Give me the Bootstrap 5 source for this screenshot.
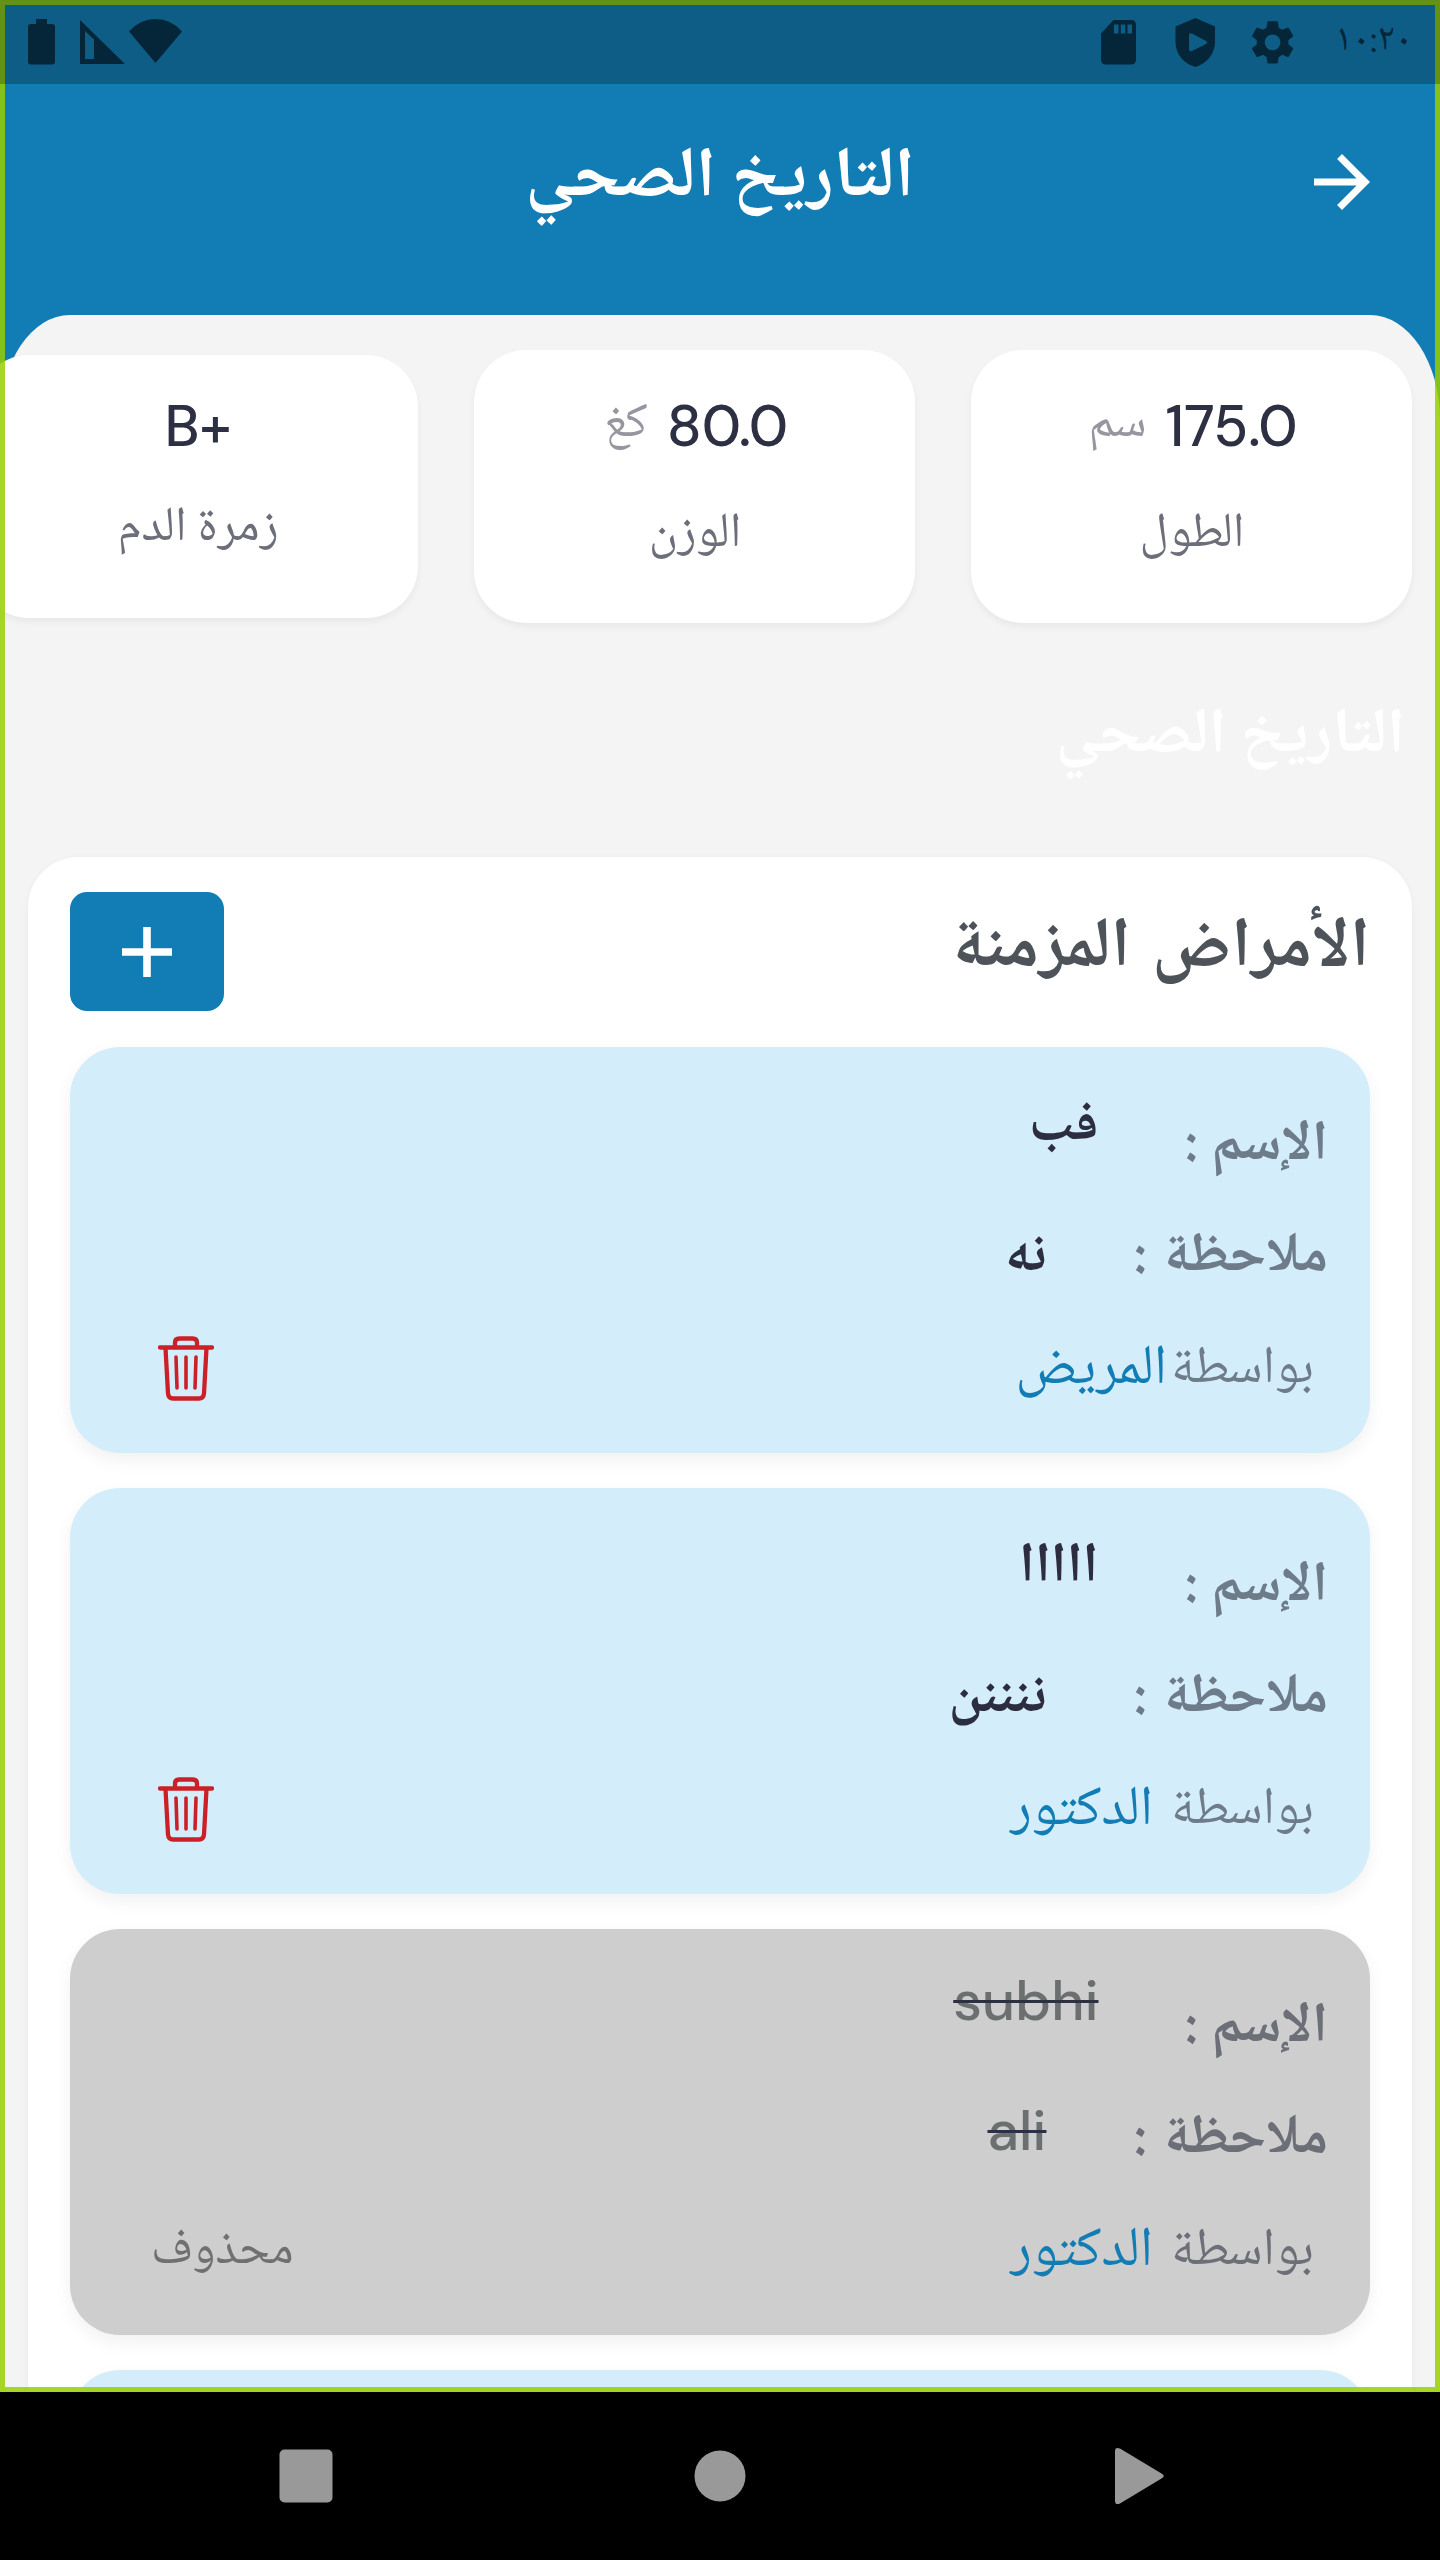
<!DOCTYPE html>
<html lang="ar" dir="rtl">
<head>
<meta charset="utf-8">
<meta name="viewport" content="width=device-width, initial-scale=1">
<title>التاريخ الصحي</title>
<link rel="stylesheet" href="https://cdn.jsdelivr.net/npm/bootstrap@5.3.0/dist/css/bootstrap.min.css">
<style>
  :root { --brand: #127cb5; --ink: #2c3042; }
  body { width: 1440px; height: 2560px; background: #000; color: var(--ink);
    font-family: "DM Sans", "Noto Naskh Arabic", "Noto Naskh Arabic UI", Inter, "DejaVu Sans", sans-serif; }
  .arabic { font-family: "Noto Naskh Arabic", "DejaVu Sans", sans-serif; }
  .screen { height: 2392px; background: var(--brand); }
  .screen-frame { inset: 0; border: 5px solid rgba(152,207,0,.85); z-index: 2; pointer-events: none; }
  .status-bar { height: 84px; background: rgba(0,0,0,.25); z-index: 3; color: #052638; padding: 0 28px 0 28px; }
  .clock { font-size: 38.5px; line-height: 90px; width: 72px; white-space: nowrap; }
  .app-bar { height: 231px; }
  .app-title { font-size: 70.7px; line-height: 120px; font-weight: 700; color: #fff; margin-top: 37px; }
  .back-btn { inset-inline-start: 70px; top: 70px; width: 56px; height: 56px; }
  .sheet { height: 2077px; background: #f4f4f4; border-radius: 70px 70px 0 0 / 105px 105px 0 0; }
  .stats { gap: 56px; padding: 35px 28px 0 0; height: 322px; }
  .stat { width: 441px; height: 273px; border-radius: 52px; background: #fff; box-shadow: 0 4px 7px rgba(0,0,0,.05); }
  .stat-short { height: 263px; margin-top: 5px; }
  .stat-value { font-family: "DM Sans", Inter, sans-serif; font-weight: 500; font-size: 57px; line-height: 71px; height: 70px; margin-top: 41px; padding-left: 3px; gap: 19px; }
  .stat-short .stat-value { margin-top: 36px; padding-left: 1px; }
  .stat-unit { font-size: 49px; line-height: 70px; color: #95969f; font-weight: 400; }
  .stat-name { font-size: 49px; line-height: 70px; color: #6c6f7a; margin-top: 40px; padding-left: 1px; }
  .stat-short .stat-name { margin-top: 34px; }
  .ghost-title { font-size: 63.4px; line-height: 100px; font-weight: 700; color: #fff; padding-right: 35px; height: 220px; padding-top: 51px; }
  .panel { height: 1600px; margin: 0 28px; border-radius: 50px 50px 0 0; background: #fff; padding: 0 42px; box-shadow: 0 2px 7px rgba(0,0,0,.05); }
  .panel-head { height: 189.5px; padding-top: 35px; }
  .panel-title { font-size: 70px; line-height: 118px; font-weight: 700; color: #4d5359; word-spacing: 6px; }
  .add-btn { width: 154px; height: 119px; border-radius: 17px; background: var(--brand); }
  .entry { height: 406px; margin-bottom: 35px; border-radius: 50px; background: #d4edfb; padding: 43px 42px 0 70px; box-shadow: 0 7px 18px rgba(0,0,0,.06); color: #6e7c8a; }
  .entry-deleted { background: #cecece; color: #6c6f77; }
  .entry-row { height: 112px; font-size: 56px; line-height: 114px; }
  .entry-label { font-weight: 700; white-space: pre; }
  .label-wide { word-spacing: 4px; }
  .entry-value { font-weight: 700; color: #2c2e40; margin-right: 85px; }
  .label-wide + .entry-value { margin-right: 86px; }
  .entry-raised { line-height: 77px; }
  .entry-deleted .entry-value { font-family: "DM Sans", Inter, sans-serif; font-weight: 500; font-size: 56.5px; color: #6b6f70; text-decoration: line-through 3px var(--ink); line-height: 94px; }
  .entry-deleted .entry-raised { line-height: 58px; }
  .entry-by { font-size: 52.5px; padding-right: 14px; }
  .entry-author { font-size: 56px; color: var(--brand); margin-right: 18px; }
  .author-near { margin-right: 4px; }
  .entry-trash { width: 56px; height: 68px; margin: 20px auto 0 18px; }
  .entry-state { font-size: 49px; color: #707070; margin-left: 11px; line-height: 113px; }
  .nav-keys { height: 168px; }
</style>
</head>
<body>
<div class="screen position-relative overflow-hidden">
  <div class="screen-frame position-absolute"></div>
  <div class="status-bar position-relative d-flex align-items-center justify-content-between">
    <div class="d-flex align-items-center">
      <span class="clock arabic">١٠:٢٠</span>
      <svg width="400" height="84" viewBox="940 0 400 84" fill="currentColor">
        <path d="M1113.500 20H1131q5 0 5 5V59.500q0 5-5 5H1106q-5 0-5-5V33.500zM1114 24.500v9h4.500v-9zm6.800 0v9h4.500v-9zm6.700 0v9h4.500v-9z" fill-rule="evenodd"/>
        <path d="M1195.500 18 1215 26.500V42c0 12-9 22-19.500 25C1184 64 1175.500 54 1175.500 42V26.500zM1189 35v14q0 3 3 2l14-7q2.500-1.500 0-3l-14-7.500q-3-1-3 1.500z" fill-rule="evenodd"/>
        <path transform="translate(1246.2 15.900) scale(2.2)" d="M19.140 12.940c.04-.3.06-.61.06-.94 0-.32-.02-.64-.07-.94l2.030-1.580c.18-.14.23-.41.12-.61l-1.920-3.320c-.12-.22-.37-.29-.59-.22l-2.390.96c-.5-.38-1.030-.7-1.620-.94L14.400 2.810c-.04-.24-.24-.41-.48-.41h-3.840c-.24 0-.43.17-.47.41l-.36 2.540c-.59.24-1.130.57-1.620.94l-2.390-.96c-.22-.08-.47 0-.59.22L2.740 8.870c-.12.21-.08.47.12.61l2.030 1.580c-.05.3-.09.63-.09.94s.02.64.07.94l-2.030 1.580c-.18.14-.23.41-.12.61l1.920 3.320c.12.22.37.29.59.22l2.390-.96c.5.38 1.030.7 1.620.94l.36 2.540c.05.24.24.41.48.41h3.840c.24 0 .44-.17.47-.41l.36-2.540c.59-.24 1.130-.56 1.620-.94l2.390.96c.22.08.47 0 .59-.22l1.920-3.320c.12-.22.07-.47-.12-.61zM12 15.600a3.600 3.600 0 1 1 0-7.200 3.600 3.600 0 0 1 0 7.200z"/>
      </svg>
    </div>
    <svg width="156" height="84" viewBox="28 0 156 84" fill="currentColor">
      <path d="M36 19h11v5h5q3 0 3 3v34.500q0 3-3 3H31q-3 0-3-3V27q0-3 3-3h5z"/>
      <path d="M80 20 125 64H80zM85 31v28h9V39.500z" fill-rule="evenodd"/>
      <path d="M155.500 63 129 31.500Q140 19 155.500 19T182 31.500z"/>
    </svg>
  </div>
  <header class="app-bar position-relative d-flex justify-content-center">
    <svg class="back-btn position-absolute" viewBox="4 4 16 16" fill="#fff" role="img" aria-label="رجوع"><path d="m12 4-1.410 1.410L16.170 11H4v2h12.170l-5.580 5.590L12 20l8-8z"/></svg>
    <h1 class="app-title arabic mb-0">التاريخ الصحي</h1>
  </header>
  <main class="sheet">
    <div class="stats d-flex">
      <div class="stat flex-shrink-0 d-flex flex-column align-items-center">
        <div class="stat-value d-flex"><span>175.0</span><span class="stat-unit arabic">سم</span></div>
        <div class="stat-name arabic">الطول</div>
      </div>
      <div class="stat flex-shrink-0 d-flex flex-column align-items-center">
        <div class="stat-value d-flex"><span>80.0</span><span class="stat-unit arabic">كغ</span></div>
        <div class="stat-name arabic">الوزن</div>
      </div>
      <div class="stat stat-short flex-shrink-0 d-flex flex-column align-items-center">
        <div class="stat-value" dir="ltr">B+</div>
        <div class="stat-name arabic">زمرة الدم</div>
      </div>
    </div>
    <h2 class="ghost-title arabic mb-0">التاريخ الصحي</h2>
    <section class="panel arabic">
      <div class="panel-head d-flex justify-content-between">
        <h3 class="panel-title mb-0">الأمراض المزمنة</h3>
        <button class="add-btn btn border-0 p-0 d-flex align-items-center justify-content-center" type="button" aria-label="إضافة">
          <svg width="50" height="50" viewBox="0 0 50 50" fill="#fff"><path d="M21.200 0h7.600v21.200H50v7.600H28.800V50h-7.600V28.800H0v-7.600h21.200z"/></svg>
        </button>
      </div>
      <article class="entry">
        <div class="entry-row d-flex align-items-start"><span class="entry-label">الإسم :</span><span class="entry-value entry-raised">فب</span></div>
        <div class="entry-row d-flex align-items-start"><span class="entry-label label-wide">ملاحظة :</span><span class="entry-value">نه</span></div>
        <div class="entry-row d-flex"><span class="entry-by">بواسطة</span><span class="entry-author author-near">المريض</span>
          <svg class="entry-trash" viewBox="0 0 56 68" fill="none" stroke="#cb2027" stroke-linecap="round" stroke-linejoin="round" role="img" aria-label="حذف"><g stroke-width="4.300"><path d="M2 13.500H54M17 13V8.500Q17 4.500 21.500 4.500H34.500Q39 4.500 39 8.500V13M7.500 14 10 59.500Q10.500 64.500 15 64.500H41Q45.500 64.500 46 59.500L48.500 14"/></g><g stroke-width="3.600"><path d="M18 23 19 54M28 23V54M38 23 37 54"/></g></svg></div>
      </article>
      <article class="entry">
        <div class="entry-row d-flex align-items-start"><span class="entry-label">الإسم :</span><span class="entry-value entry-raised">ااااا</span></div>
        <div class="entry-row d-flex align-items-start"><span class="entry-label label-wide">ملاحظة :</span><span class="entry-value">ننننن</span></div>
        <div class="entry-row d-flex"><span class="entry-by">بواسطة</span><span class="entry-author">الدكتور</span>
          <svg class="entry-trash" viewBox="0 0 56 68" fill="none" stroke="#cb2027" stroke-linecap="round" stroke-linejoin="round" role="img" aria-label="حذف"><g stroke-width="4.300"><path d="M2 13.500H54M17 13V8.500Q17 4.500 21.500 4.500H34.500Q39 4.500 39 8.500V13M7.500 14 10 59.500Q10.500 64.500 15 64.500H41Q45.500 64.500 46 59.500L48.500 14"/></g><g stroke-width="3.600"><path d="M18 23 19 54M28 23V54M38 23 37 54"/></g></svg></div>
      </article>
      <article class="entry entry-deleted">
        <div class="entry-row d-flex align-items-start"><span class="entry-label">الإسم :</span><span class="entry-value entry-raised">subhi</span></div>
        <div class="entry-row d-flex align-items-start"><span class="entry-label label-wide">ملاحظة :</span><span class="entry-value">ali</span></div>
        <div class="entry-row d-flex"><span class="entry-by">بواسطة</span><span class="entry-author">الدكتور</span><span class="entry-state me-auto">محذوف</span></div>
      </article>
      <article class="entry"></article>
    </section>
  </main>
</div>
<nav class="nav-keys d-flex" aria-label="أزرار النظام">
  <svg width="1440" height="168" viewBox="0 2392 1440 168" fill="#999"><path d="M1115 2451Q1115 2446.500 1120 2448.500L1161.500 2473.500Q1166 2476 1161.500 2478.500L1120 2503.500Q1115 2505.500 1115 2501z"/><circle cx="720" cy="2476" r="25.500"/><rect x="279.500" y="2449.500" width="53" height="53" rx="5"/></svg>
</nav>
<script src="https://cdn.jsdelivr.net/npm/bootstrap@5.3.0/dist/js/bootstrap.bundle.min.js"></script>
</body>
</html>
